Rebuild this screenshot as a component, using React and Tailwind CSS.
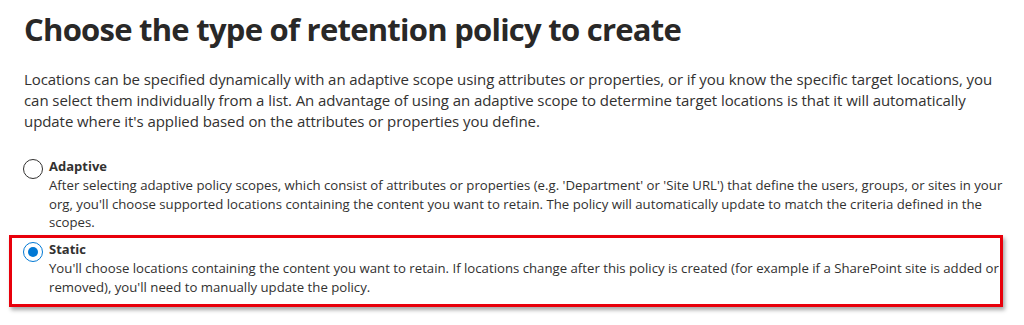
import React from 'react';

const font = { fontFamily: '"Open Sans", "Noto Sans", sans-serif' };

const Radio = ({ checked }) => (
  <span
    className={`mt-[1.5px] flex h-5 w-5 shrink-0 items-center justify-center rounded-full border ${
      checked ? 'border-[#0078d4]' : 'border-[#323130]'
    } bg-white`}
  >
    {checked && <span className="h-[10px] w-[10px] rounded-full bg-[#0078d4]" />}
  </span>
);

const Option = ({ checked, title, lines }) => (
  <div className="flex gap-[6px]">
    <Radio checked={checked} />
    <div>
      <div className="text-[13px] font-bold leading-[19px] text-[#323130]">{title}</div>
      <p className="whitespace-nowrap text-[13.2px] leading-[18.5px] text-[#323130]">
        {lines.map((l, i) => (
          <React.Fragment key={i}>
            {l}
            {i < lines.length - 1 && <br />}
          </React.Fragment>
        ))}
      </p>
    </div>
  </div>
);

export default function App() {
  return (
    <div className="h-[325px] w-[1024px] overflow-hidden bg-white pt-[6px]" style={font}>
      <h1 className="whitespace-nowrap pl-6 text-[31px] font-bold leading-[46px] tracking-[-0.75px] text-[#292827]">
        Choose the type of retention policy to create
      </h1>

      <p className="mt-[17px] whitespace-nowrap pl-6 text-[15px] leading-[21px] tracking-[-0.07px] text-[#323130]">
        Locations can be specified dynamically with an adaptive scope using attributes or properties, or if you know the specific target locations, you
        <br />
        can select them individually from a list. An advantage of using an adaptive scope to determine target locations is that it will automatically
        <br />
        update where it's applied based on the attributes or properties you define.
      </p>

      <div className="mt-[25px] pl-[23px]">
        <Option
          title="Adaptive"
          lines={[
            "After selecting adaptive policy scopes, which consist of attributes or properties (e.g. 'Department' or 'Site URL') that define the users, groups, or sites in your",
            "org, you'll choose supported locations containing the content you want to retain. The policy will automatically update to match the criteria defined in the",
            'scopes.',
          ]}
        />
      </div>

      <div className="ml-[9px] mt-[3px] w-[994px] border-[3px] border-[#e8000b] pb-[7.5px] pl-[11px] pt-[2.5px] shadow-[2px_3px_4px_rgba(0,0,0,0.35)]">
        <Option
          checked
          title="Static"
          lines={[
            "You'll choose locations containing the content you want to retain. If locations change after this policy is created (for example if a SharePoint site is added or",
            "removed), you'll need to manually update the policy.",
          ]}
        />
      </div>
    </div>
  );
}
